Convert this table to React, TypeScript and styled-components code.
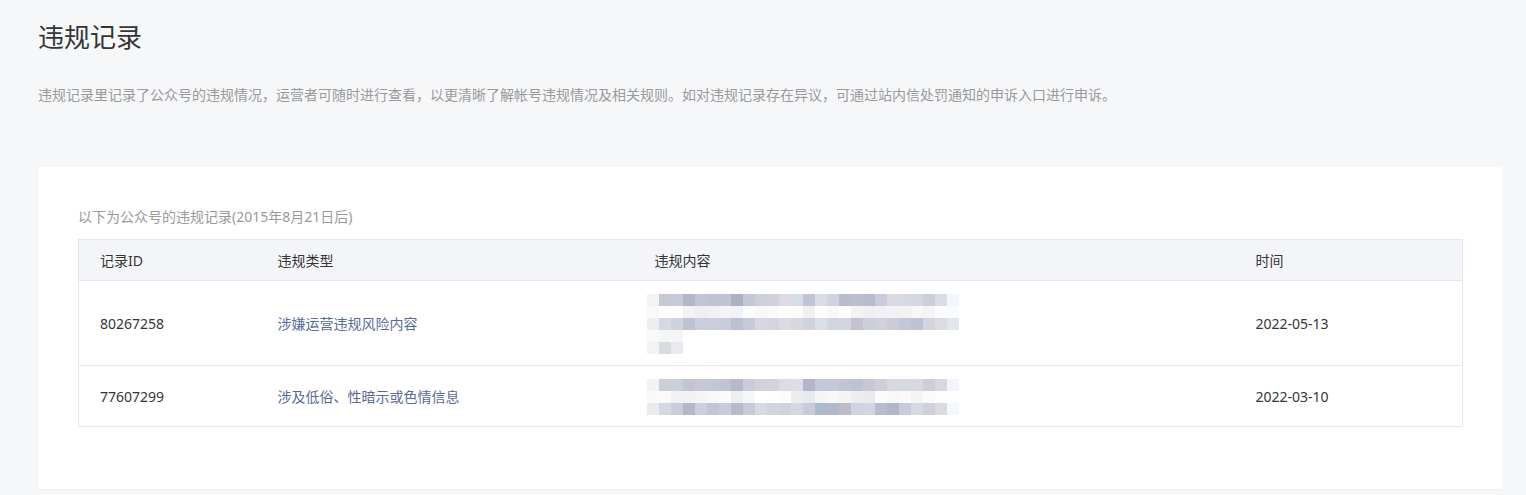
import React from "react";
import styled, { createGlobalStyle } from "styled-components";

const GlobalStyle = createGlobalStyle`
  html, body { margin: 0; padding: 0; background: #f6f7f9; }
  body {
    font-family: "Noto Sans", "Noto Sans CJK SC", sans-serif;
    color: #353535;
    -webkit-font-smoothing: antialiased;
  }
`;

const Page = styled.div`
  padding: 19px 23px 6px 38px;
  display: flex;
  flex-direction: column;
`;

const Title = styled.h1`
  margin: 0;
  font-size: 26px;
  line-height: 36px;
  font-weight: 400;
  color: #353535;
`;

const Desc = styled.p`
  margin: 30px 0 0;
  font-size: 14px;
  line-height: 20px;
  color: #9a9a9a;
`;

const Card = styled.section`
  margin-top: 62px;
  background: #fff;
  border-radius: 4px;
  padding: 40px 41px 62px 40px;
  box-shadow: 0 1px 2px rgba(0, 0, 0, 0.03);
`;

const SubTitle = styled.div`
  font-size: 14px;
  line-height: 20px;
  color: #9a9a9a;
  margin-bottom: 12px;
`;

const Table = styled.table`
  width: 100%;
  table-layout: fixed;
  border-collapse: collapse;
  border: 1px solid #e4e6eb;
  font-size: 14px;
`;

const Th = styled.th`
  background: #f4f5f9;
  height: 40px;
  padding: 0 0 0 21px;
  text-align: left;
  font-weight: 400;
  color: #353535;
  border-bottom: 1px solid #e4e6eb;
`;

const Td = styled.td<{ $link?: boolean }>`
  padding: 13px 0 11px 21px;
  vertical-align: middle;
  color: ${(p) => (p.$link ? "#576b95" : "#353535")};
  line-height: 20px;
`;

const Tr = styled.tr`
  & + & td {
    border-top: 1px solid #e4e6eb;
  }
`;

const Mosaic = styled.div`
  margin-left: -8px;
  display: flex;
  flex-direction: column;
`;

const MosaicRow = styled.div`
  display: flex;
  height: 12px;
`;

const Cell = styled.span`
  width: 12px;
  height: 12px;
  flex: none;
`;

const m1 = [
  "f3f3f5 c5c9d6 c8cbd8 b4b7ca c2c6d4 c0c3d3 c2c4d2 adb1c6 c4c8d6 cdd0db d0d3de dedce2 d7dde6 c2c4d3 dadde6 d0d3de bbbdcf b9c1d1 b8bccd c8cbd8 dadae0 d5dae4 d5d7e0 cccfda dadde6 f3f7fb",
  "f9f9fa ffffff ffffff f3f3f5 efeef2 f1f1f4 f4f4f7 f2f3f6 fdfdfd f7f8fa fafafb fefdfc fbfbfb f0f0f4 ffffff f9f9fb ffffff f3f3f6 f0f0f3 f1f1f5 f1f2f5 f2f2f4 f7f7f8 f4f4f6 fcfcfc fafbfc",
  "eeeef0 d6d9e3 d0d2dd bfc2d2 cbcddb cbcdda c9ccda bcc0d3 c7cad8 d6d7e0 d2d5df dcdbe1 d5d8e1 cfd3de dbdfe7 d2d5df d2d5df c2c2d0 ccced9 cfd2dd cbccd8 c2c8d6 bfc2d3 d3d4de dcdbe0 e2e6ee",
  "f9f9fa f5f5f6 f5f5f6",
  "f3f3f5 d8dbe3 e9eaef",
];

const m2 = [
  "f3f3f5 cbcedb cbcedb c2c4d3 c6c8d6 c4c8d5 c1c3d3 b6b9cb cbccd9 d1d2dc d1d3dd dcdce2 dcdfe8 b4b5c9 c5c8d6 c5c8d6 c2c4d4 bcc3d2 c6c8d6 cdd0dc d8d8de d5d9e2 d8dae2 cccfda d5d8e1 f2f6fa",
  "f9f9fa fafafb f2f2f5 f2f2f5 f5f5f7 f8f8f9 fafbfa eeeef2 f5f6f8 ffffff fefefe fdfcfb ededf0 e9eaee f4f5f7 f8f8fa f4f4f6 ededf0 e9e9ee fbfbfb f7f8fa fafafb f4f4f6 fafafa fdfdfd fefefe",
  "ebebef d6d9e3 cbcdd9 b5b7c9 cdcfdc c2c5d4 c8cbd8 b8bacc c8cad8 d8dae3 d2d4de d0d2dd d5d6df c9cbd8 adb9cc b5b8ca bdbcc8 cfd4df d3d5df b6bdcc b0b7c8 c8ccda d7d9e2 cfd0db dadadf f4f8fd",
];

function Pixelated({ rows }: { rows: string[] }) {
  return (
    <Mosaic aria-hidden>
      {rows.map((r, i) => (
        <MosaicRow key={i}>
          {r.split(" ").map((c, j) => (
            <Cell key={j} style={{ background: `#${c}` }} />
          ))}
        </MosaicRow>
      ))}
    </Mosaic>
  );
}

const records = [
  { id: "80267258", type: "涉嫌运营违规风险内容", blur: m1, time: "2022-05-13" },
  { id: "77607299", type: "涉及低俗、性暗示或色情信息", blur: m2, time: "2022-03-10" },
];

export default function App() {
  return (
    <>
      <GlobalStyle />
      <Page>
        <Title>违规记录</Title>
        <Desc>
          违规记录里记录了公众号的违规情况，运营者可随时进行查看，以更清晰了解帐号违规情况及相关规则。如对违规记录存在异议，可通过站内信处罚通知的申诉入口进行申诉。
        </Desc>
        <Card>
          <SubTitle>以下为公众号的违规记录(2015年8月21日后)</SubTitle>
          <Table>
            <colgroup>
              <col style={{ width: 178 }} />
              <col style={{ width: 377 }} />
              <col style={{ width: 601 }} />
              <col style={{ width: 228 }} />
            </colgroup>
            <thead>
              <tr>
                <Th>记录ID</Th>
                <Th>违规类型</Th>
                <Th>违规内容</Th>
                <Th>时间</Th>
              </tr>
            </thead>
            <tbody>
              {records.map((r) => (
                <Tr key={r.id}>
                  <Td>{r.id}</Td>
                  <Td $link>{r.type}</Td>
                  <Td>
                    <Pixelated rows={r.blur} />
                  </Td>
                  <Td>{r.time}</Td>
                </Tr>
              ))}
            </tbody>
          </Table>
        </Card>
      </Page>
    </>
  );
}
